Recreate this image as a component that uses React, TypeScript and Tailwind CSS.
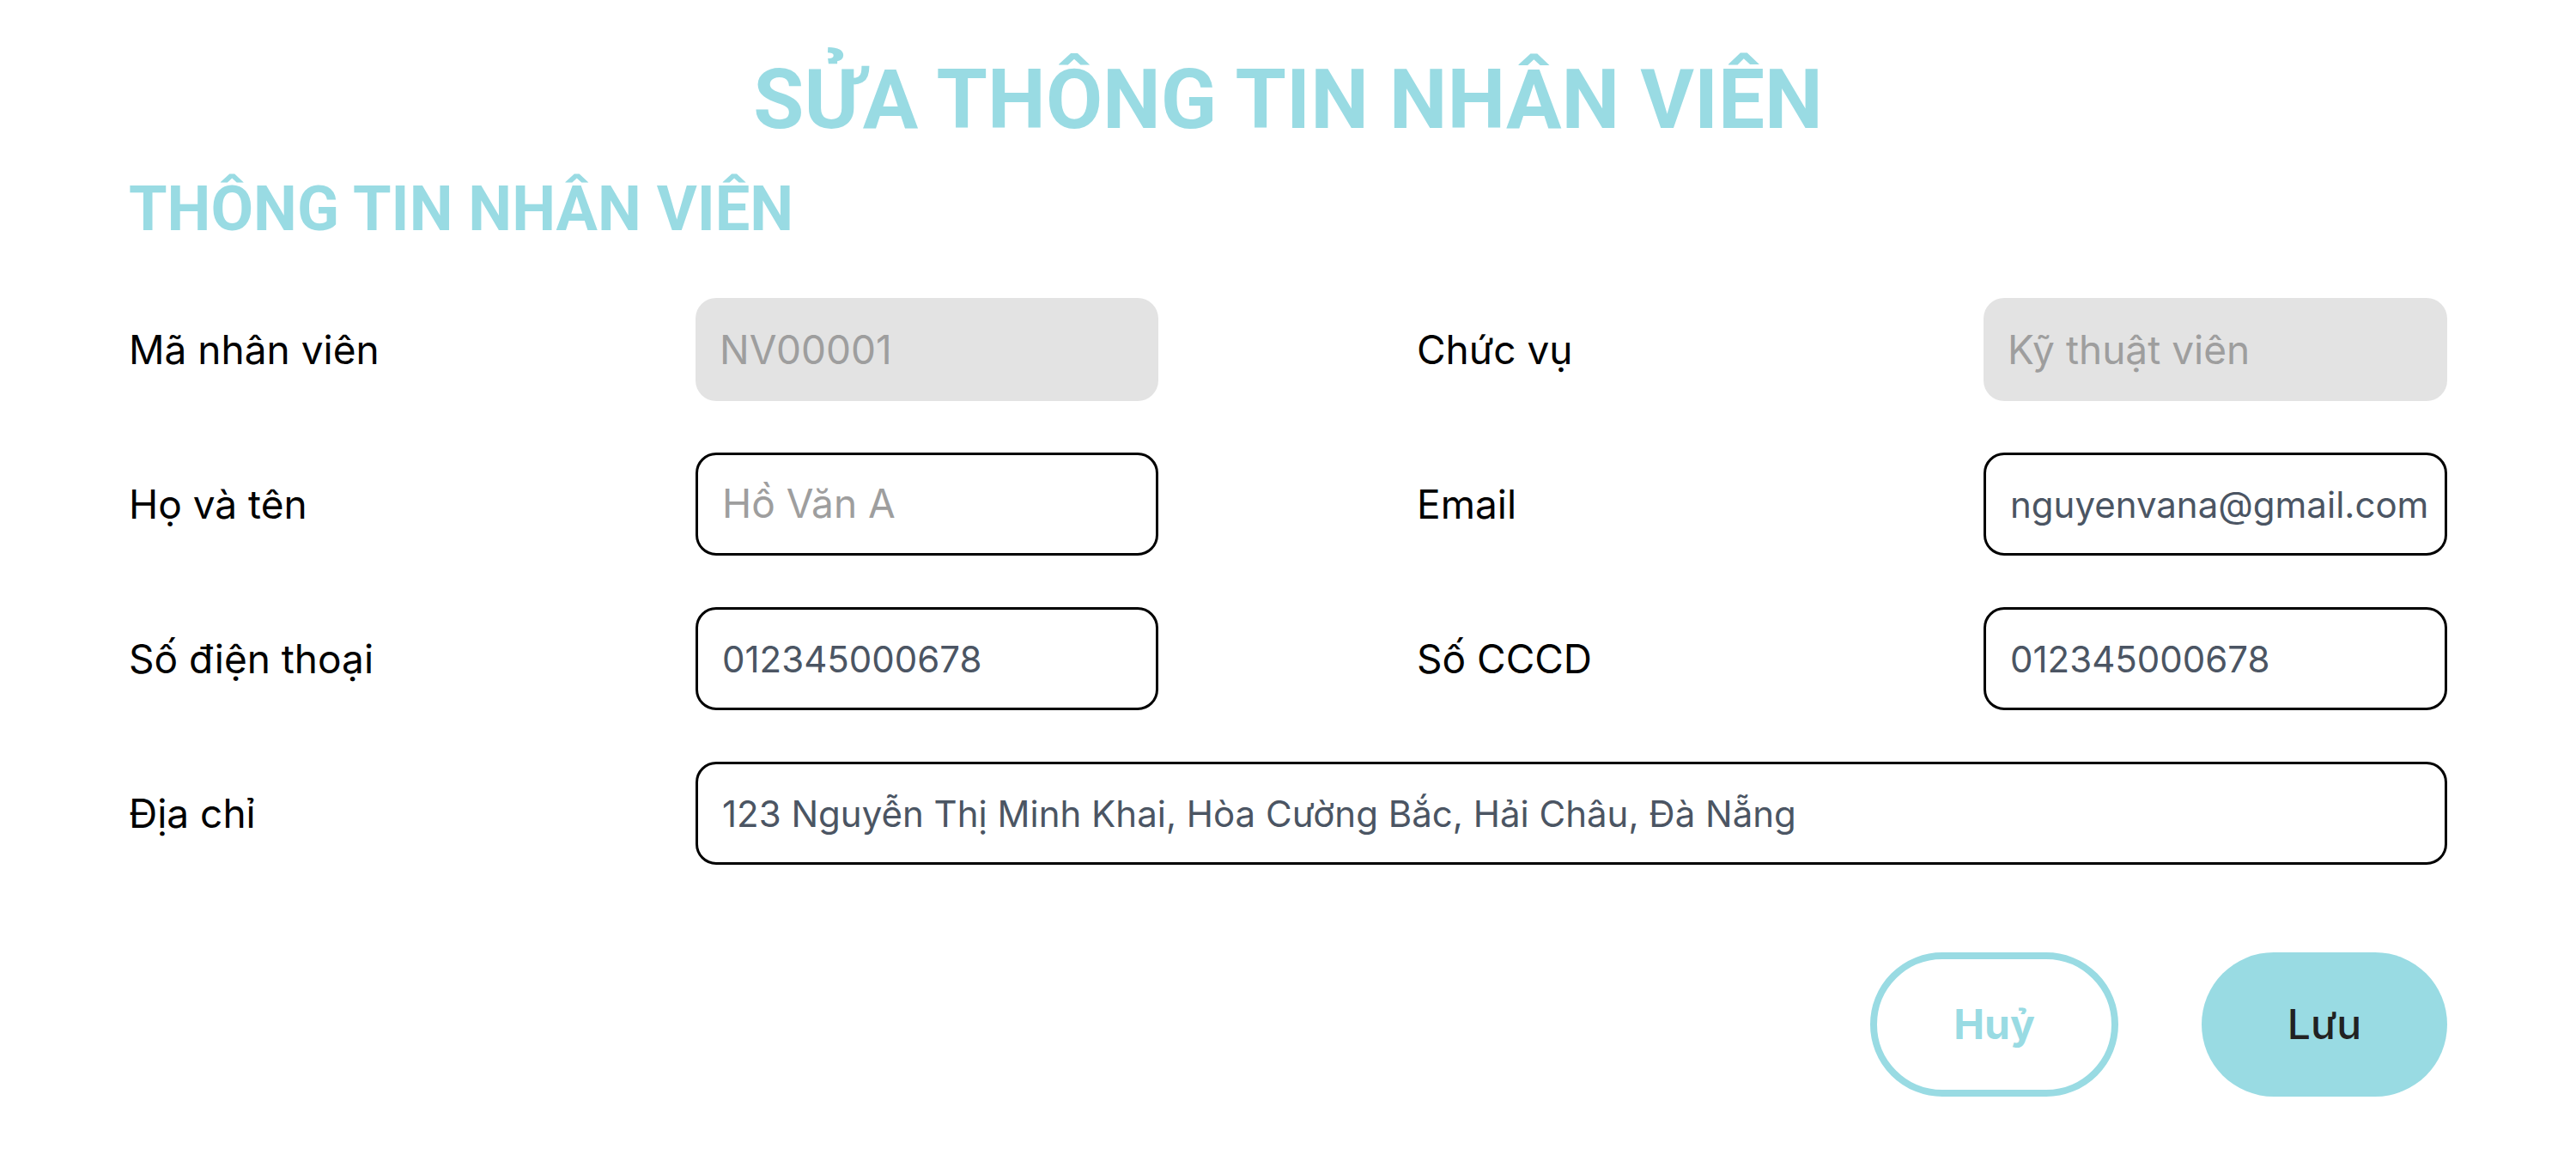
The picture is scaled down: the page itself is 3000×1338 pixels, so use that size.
import { useState } from "react";

const field = "h-[120px] w-full rounded-[24px] pl-[28px] pr-[14px] outline-none font-['Inter',sans-serif]";
const editable = `${field} border-[3px] border-black bg-white text-[42px] text-[#4b5563] placeholder:text-[46px] placeholder:text-[#9e9e9e]`;
const locked = `${field} bg-[#e3e3e3] text-[46px] text-[#9e9e9e]`;

function Label({ children }: { children: string }) {
    return <span className="text-[46px] text-black font-['Inter',sans-serif]">{children}</span>;
}

export default function App() {
    const [name, setName] = useState("");
    const [email, setEmail] = useState("nguyenvana@gmail.com");
    const [phone, setPhone] = useState("012345000678");
    const [cccd, setCccd] = useState("012345000678");
    const [address, setAddress] = useState("123 Nguyễn Thị Minh Khai, Hòa Cường Bắc, Hải Châu, Đà Nẵng");

    return (
        <div className="min-h-screen bg-white px-[150px] pt-[68px] font-['Roboto',sans-serif]">
            <h1 className="text-center text-[96px] font-bold leading-none text-[#99dbe3]">
                SỬA THÔNG TIN NHÂN VIÊN
            </h1>
            <h2 className="mt-[44px] text-[72px] font-bold leading-none text-[#99dbe3]">
                THÔNG TIN NHÂN VIÊN
            </h2>

            <div className="mt-[67px] grid grid-cols-[660px_539px_1fr_660px_540px] items-center gap-y-[60px]">
                <Label>Mã nhân viên</Label>
                <input className={locked} value="NV00001" disabled readOnly />
                <div />
                <Label>Chức vụ</Label>
                <input className={locked} value="Kỹ thuật viên" disabled readOnly />

                <Label>Họ và tên</Label>
                <input
                    className={editable}
                    value={name}
                    onChange={(e) => setName(e.target.value)}
                    placeholder="Hồ Văn A"
                />
                <div />
                <Label>Email</Label>
                <input className={editable} value={email} onChange={(e) => setEmail(e.target.value)} />

                <Label>Số điện thoại</Label>
                <input className={editable} value={phone} onChange={(e) => setPhone(e.target.value)} />
                <div />
                <Label>Số CCCD</Label>
                <input className={editable} value={cccd} onChange={(e) => setCccd(e.target.value)} />

                <Label>Địa chỉ</Label>
                <input
                    className={`${editable} col-span-4 pl-[26px]`}
                    value={address}
                    onChange={(e) => setAddress(e.target.value)}
                />
            </div>

            <div className="mt-[102px] flex justify-end gap-[97px]">
                <button className="h-[168px] w-[289px] rounded-full border-[8px] border-[#99dbe3] bg-white text-[48px] font-bold text-[#99dbe3] font-['Inter',sans-serif]">
                    Huỷ
                </button>
                <button className="h-[168px] w-[286px] rounded-full bg-[#99dbe3] text-[48px] font-medium text-[#222222] font-['Inter',sans-serif]">
                    Lưu
                </button>
            </div>
        </div>
    );
}
